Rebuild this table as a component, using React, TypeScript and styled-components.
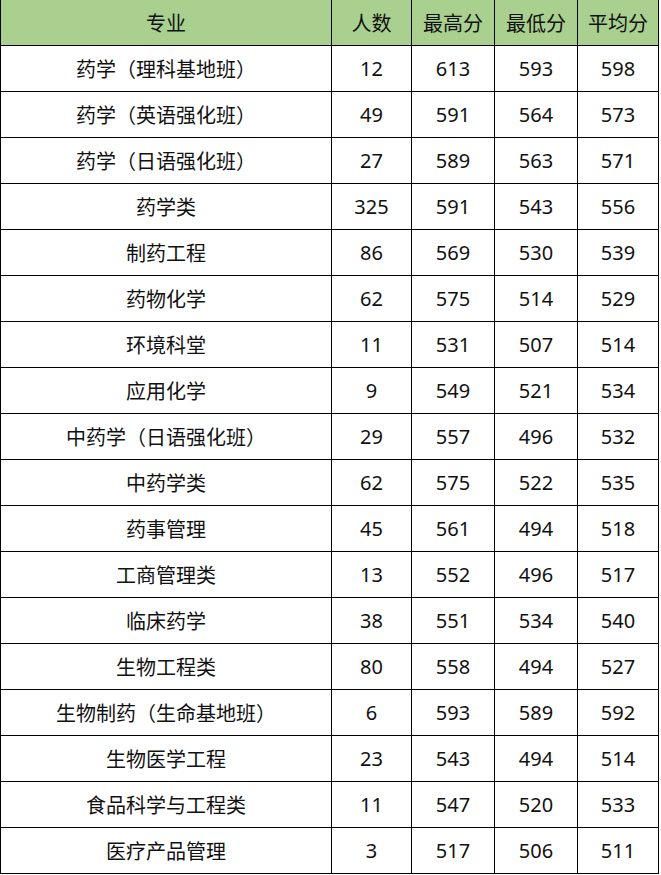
import React from "react";
import { styled, createGlobalStyle } from "styled-components";

type Row = [string, number, number, number, number];

const rows: Row[] = [
  ["药学（理科基地班）", 12, 613, 593, 598],
  ["药学（英语强化班）", 49, 591, 564, 573],
  ["药学（日语强化班）", 27, 589, 563, 571],
  ["药学类", 325, 591, 543, 556],
  ["制药工程", 86, 569, 530, 539],
  ["药物化学", 62, 575, 514, 529],
  ["环境科堂", 11, 531, 507, 514],
  ["应用化学", 9, 549, 521, 534],
  ["中药学（日语强化班）", 29, 557, 496, 532],
  ["中药学类", 62, 575, 522, 535],
  ["药事管理", 45, 561, 494, 518],
  ["工商管理类", 13, 552, 496, 517],
  ["临床药学", 38, 551, 534, 540],
  ["生物工程类", 80, 558, 494, 527],
  ["生物制药（生命基地班）", 6, 593, 589, 592],
  ["生物医学工程", 23, 543, 494, 514],
  ["食品科学与工程类", 11, 547, 520, 533],
  ["医疗产品管理", 3, 517, 506, 511],
];

const headers = ["专业", "人数", "最高分", "最低分", "平均分"];

export default function App() {
  return (
    <>
      <Global />
      <Sheet>
        {headers.map((h) => (
          <HeadCell key={h}>{h}</HeadCell>
        ))}
        {rows.map((r) =>
          r.map((v, i) => <Cell key={r[0] + i}>{v}</Cell>)
        )}
      </Sheet>
    </>
  );
}

const Global = createGlobalStyle`
  html, body {
    margin: 0;
    padding: 0;
    background: #ffffff;
  }
`;

const Sheet = styled.div`
  display: grid;
  grid-template-columns: 330px 79px 82px 82px 80px;
  grid-auto-rows: 45px;
  gap: 1px;
  width: 659px;
  padding: 0 1px 1px 1px;
  box-sizing: border-box;
  background: #000000;
  font-family: "Noto Sans", "Noto Sans CJK SC", sans-serif;
  font-size: 20px;
  color: #111111;
`;

const Cell = styled.div`
  display: flex;
  align-items: center;
  justify-content: center;
  background: #ffffff;
  white-space: nowrap;
`;

const HeadCell = styled(Cell)`
  background: #a9d08e;
`;
